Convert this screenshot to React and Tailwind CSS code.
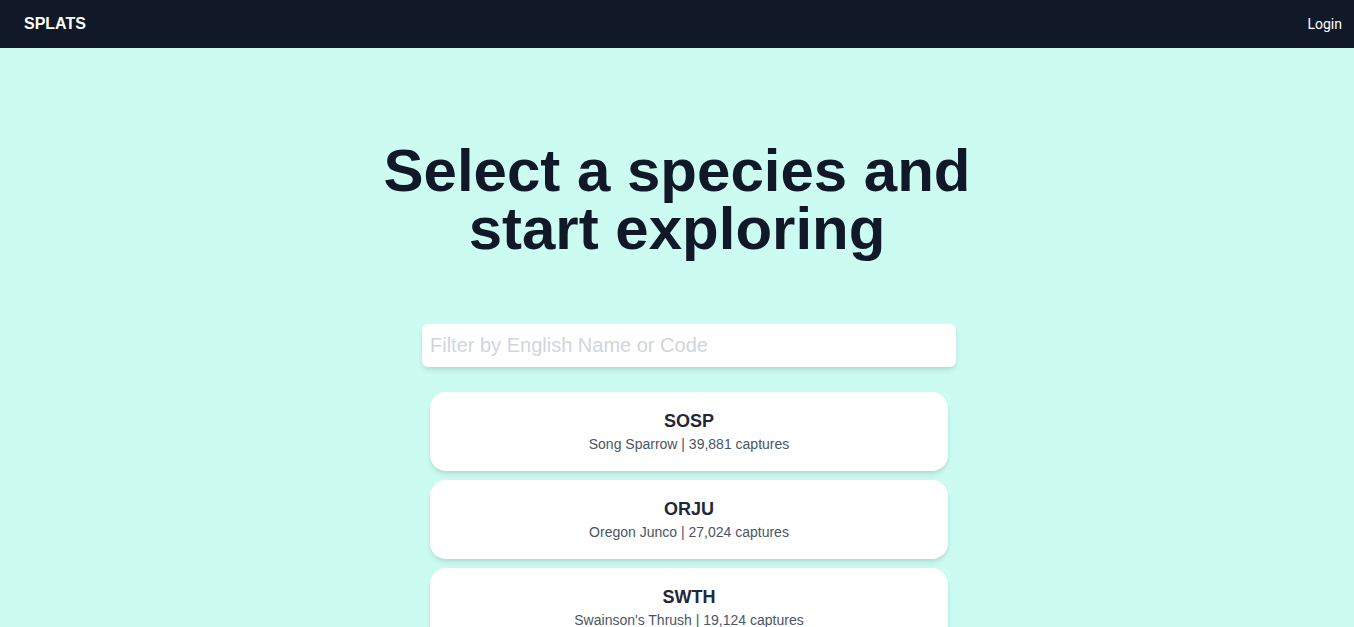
import React from "react";

const species = [
  { code: "SOSP", name: "Song Sparrow", count: "39,881" },
  { code: "ORJU", name: "Oregon Junco", count: "27,024" },
  { code: "SWTH", name: "Swainson's Thrush", count: "19,124" },
  { code: "WIWA", name: "Wilson's Warbler", count: "12,410" },
];

export default function App() {
  return (
    <div className="min-h-screen bg-[#ccfbf1]" style={{ fontFamily: '"Liberation Sans", Arial, sans-serif' }}>
      <nav className="h-12 bg-[#111827] flex items-center justify-between px-6 pr-3">
        <div className="text-white font-bold text-base tracking-normal">SPLATS</div>
        <div className="text-white text-sm" style={{ fontFamily: 'Roboto, sans-serif' }}>Login</div>
      </nav>
      <main className="flex flex-col items-center">
        <h1 className="mt-[94px] text-[60px] leading-[58px] font-bold text-[#111827] text-center">
          Select a species and
          <br />
          start exploring
        </h1>
        <div className="mt-[66px] ml-6 w-[534px]">
          <input
            className="w-full h-[43px] bg-white rounded-md shadow-md px-2 text-[20px] text-gray-800 placeholder:text-gray-300 outline-none"
            placeholder="Filter by English Name or Code"
          />
          <div className="mx-2 mt-[25px] flex flex-col gap-[9px]">
            {species.map((s) => (
              <div key={s.code} className="bg-white rounded-2xl shadow-md h-[79px] flex flex-col items-center justify-center">
                <div className="text-lg font-bold text-gray-800 leading-6">{s.code}</div>
                <div className="text-sm text-gray-600 leading-5 mt-[1px]">
                  {s.name} | {s.count} captures
                </div>
              </div>
            ))}
          </div>
        </div>
      </main>
    </div>
  );
}
